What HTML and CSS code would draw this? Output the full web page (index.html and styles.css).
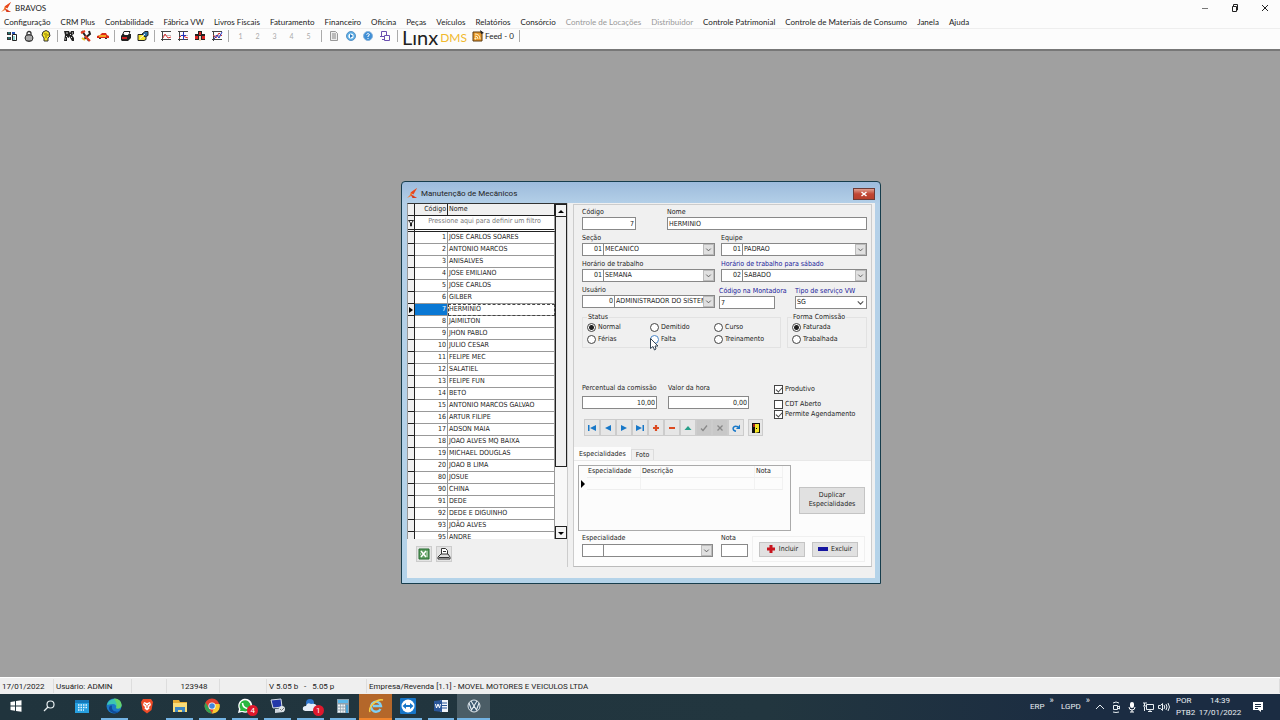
FILE: index.html
```html
<!DOCTYPE html>
<html lang="pt-BR">
<head>
<meta charset="utf-8">
<title>BRAVOS</title>
<link rel="stylesheet" href="styles.css">
</head>
<body>
<svg class="defs" aria-hidden="true">
  <symbol id="brand" viewBox="0 0 12 12"><path d="M11 0 4 5 3 8 0 11 4 9z" fill="#f47b30"/><path d="M4 5 11 0 7 7z" fill="#e8451e"/><path d="M4 7 6 8 11 11 6 11z" fill="#d93a1c"/></symbol>
  <symbol id="chev" viewBox="0 0 10 10"><path d="M2.500 4 5 6.500 7.500 4" fill="none" stroke="#555" stroke-width="1"/></symbol>
  <symbol id="chart" viewBox="0 0 12 12"><path d="M2.500 1v10M1 1.500h10M1 9.500h10" stroke="#444" fill="none"/><path d="M3 5.500h8" stroke="#bbb"/></symbol>
</svg>

<header class="titlebar">
  <svg class="brand"><use href="#brand"/></svg>
  <span class="app-name">BRAVOS</span>
  <div class="win-controls">
    <button aria-label="Minimizar"><svg viewBox="0 0 10 10"><path d="M2 5.500h6" stroke="#777" fill="none"/></svg></button>
    <button aria-label="Restaurar"><svg viewBox="0 0 10 10"><path d="M2.500 3.500h4v5h-4zM3.500 3V1.500h4v5.500H7" stroke="#222" fill="none"/></svg></button>
    <button aria-label="Fechar"><svg viewBox="0 0 10 10"><path d="M2 2l6 6M8 2 2 8" stroke="#222" fill="none"/></svg></button>
  </div>
</header>

<nav class="menubar">
  <button>Configuração</button><button>CRM Plus</button><button>Contabilidade</button><button>Fábrica VW</button><button>Livros Fiscais</button><button>Faturamento</button><button>Financeiro</button><button>Oficina</button><button>Peças</button><button>Veículos</button><button>Relatórios</button><button>Consórcio</button><button disabled>Controle de Locações</button><button disabled>Distribuidor</button><button>Controle Patrimonial</button><button>Controle de Materiais de Consumo</button><button>Janela</button><button>Ajuda</button>
</nav>

<div class="toolbar">
  <div class="tools">
    <button aria-label="Cadastro"><svg viewBox="0 0 12 12"><path d="M1 2h4v3H1zM1 7h4v3H1z" fill="#333"/><path d="M6 2h3v2H6z" fill="#2450b0"/><path d="M6.500 4.500h4v6h-4z" fill="#fff" stroke="#222"/><path d="M8 6v4M2 3h2M2 8h2" stroke="#2aa" /></svg></button>
    <button aria-label="Senha"><svg viewBox="0 0 12 12"><path d="M4 6V3.500a2 2 0 0 1 4 0V6" fill="none" stroke="#333" stroke-width="1.300"/><ellipse cx="6" cy="8" rx="4" ry="3.500" fill="#777" stroke="#333"/><path d="M3 7h6M3 9h6" stroke="#ddd"/></svg></button>
    <button aria-label="Usuário"><svg viewBox="0 0 12 12"><path d="M3 2Q6-1 9 2L10 6 8 8v3H4V8L2 5z" fill="#f4e32a" stroke="#333"/><path d="M6 3v5M4 4h1M8 4v2" stroke="#887500"/></svg></button>
  </div>
  <div class="tools">
    <button aria-label="Veículos novos"><svg viewBox="0 0 12 12"><path d="M1 1h5l1 2 1-2h3v3l-2 1 2 3v3H9L6 6v2L4 7v4H1l1-6z" fill="#222"/><path d="M3 3h2M3 6l1 1M7 4l1 1M9 3h1M2 9h1M8 7l1 1" stroke="#ddd"/></svg></button>
    <button aria-label="Oficina"><svg viewBox="0 0 12 12"><path d="M2 1l7 10M9 1l1 3-6 5" stroke="#222" stroke-width="2" fill="none"/><path d="M1 3l4-2M5 6l5 5" stroke="#df3b20" stroke-width="2"/><path d="M2 8l3 2" stroke="#e9c729" stroke-width="2"/></svg></button>
    <button aria-label="Carro"><svg viewBox="0 0 12 12"><path d="M0 6 3 5 5 3h4l1 2 2 1v2H0z" fill="#d92b18"/><path d="M2 5h7v2H2z" fill="#f5a525"/><path d="M2 8h2v1H2zM8 8h2v1H8z" fill="#333"/></svg></button>
  </div>
  <div class="tools">
    <button aria-label="Imprimir"><svg viewBox="0 0 12 12"><path d="M4 1.500h6L8 6H2z" fill="#fff" stroke="#222"/><path d="M1 6l2-2h8v4L8 11H2L1 10z" fill="#222"/><path d="M2 7h5v2H2z" fill="#c22"/><path d="M5 3h4L8 5H4z" fill="#fff"/></svg></button>
    <button aria-label="Editar"><svg viewBox="0 0 12 12"><path d="M1 4.500h6l2 1v4l-2 1H1z" fill="#f4e32a" stroke="#222"/><path d="M5 4 8 1.500h3v4L8 7z" fill="#2b72a8" stroke="#222"/><path d="M3 8.500 8 4" stroke="#fff"/></svg></button>
  </div>
  <div class="tools">
    <button aria-label="Gráfico 1"><svg viewBox="0 0 12 12"><use href="#chart"/><path d="M3 8 5 4l3 4 3-1" stroke="#d33" fill="none"/></svg></button>
    <button aria-label="Gráfico 2"><svg viewBox="0 0 12 12"><use href="#chart"/><path d="M2 8 5 5l3 2 3 1" stroke="#d33" fill="none"/><path d="M6.500 2v8M4 5.500h5" stroke="#23b"/></svg></button>
    <button aria-label="Equipe"><svg viewBox="0 0 12 12"><path d="M4 1h4v3h3v6H1V4h3z" fill="#222"/><path d="M5 2h2v3H5zM1 6h3v3H1zM8 6h3v3H8z" fill="#d22"/><path d="M5 6h2v5H5z" fill="#f1d6c0"/></svg></button>
    <button aria-label="Gráfico 3"><svg viewBox="0 0 12 12"><use href="#chart"/><path d="M2 5 5 8 8 3l3 3" stroke="#d33" fill="none"/><path d="M3 9 6 5l2 3 3-6" stroke="#23b" fill="none"/></svg></button>
  </div>
  <div class="tools spaced">
    <button disabled>1</button><button disabled>2</button><button disabled>3</button><button disabled>4</button><button disabled>5</button>
  </div>
  <div class="tools spaced">
    <button aria-label="Documento"><svg viewBox="0 0 12 12"><path d="M2.500 1.500h5l2 2v7h-7z" fill="#eee" stroke="#999"/><path d="M4 4h4M4 6h4M4 8h4" stroke="#888"/></svg></button>
    <button aria-label="Executar"><svg viewBox="0 0 12 12"><circle cx="6" cy="6" r="4.500" fill="#5aaee6" stroke="#5a92c4"/><circle cx="6" cy="6" r="2.600" fill="#fff"/><path d="M5 4l3 2-3 2z" fill="#2477c0"/></svg></button>
    <button aria-label="Ajuda"><svg viewBox="0 0 12 12"><circle cx="6" cy="6" r="4.500" fill="#3f8fd6" stroke="#8ab4dc"/><path d="M4.500 4.500Q6 2.500 7.500 4.500 7.500 5.500 6 6v1M6 8v1" stroke="#fff" fill="none"/></svg></button>
    <button aria-label="Janelas"><svg viewBox="0 0 12 12"><path d="M2.500 6V1.500h5v4M5.500 5.500h5v5h-5zM1 6.500h4M3 9.500h2" stroke="#6a4fb0" fill="none"/></svg></button>
  </div>
  <div class="tools brandtools">
    <span class="linx">Lınx</span><span class="dms">DMS</span>
    <button class="feed"><svg viewBox="0 0 12 12"><path d="M1 2h9v9H1z" fill="#e99a2c" stroke="#5b3a12"/><path d="M3 9V8h1v1zM3 6Q6 6 6 9M3 4Q8 4 8 9" stroke="#fff3c8" fill="none"/><path d="M8 0l4 3-3 1z" fill="#222"/></svg>Feed - 0</button>
  </div>
</div>

<main class="mdi">
  <section class="dialog" aria-label="Manutenção de Mecânicos">
    <div class="dialog-title">
      <svg class="brand"><use href="#brand"/></svg>
      <h1>Manutenção de Mecânicos</h1>
      <button class="close" aria-label="Fechar janela"><svg viewBox="0 0 8 6"><path d="M1.500 1l5 4M6.500 1l-5 4" stroke="#fff" stroke-width="1.500"/></svg></button>
    </div>
    <div class="client">
      <div class="list-pane">
        <div class="list">
          <div class="list-view">
          <table class="people">
            <colgroup><col class="c-mark"><col class="c-code"><col></colgroup>
            <thead>
              <tr><th></th><th class="num">Código</th><th>Nome</th></tr>
              <tr class="filter"><td><svg viewBox="0 0 6 8"><path d="M.5 1.500h5L3.500 4v3h-1V4z" fill="#fff" stroke="#222"/></svg></td><td colspan="2">Pressione aqui para definir um filtro</td></tr>
            </thead>
            <tbody>
              <tr><td></td><td>1</td><td>JOSE CARLOS SOARES</td></tr>
              <tr><td></td><td>2</td><td>ANTONIO MARCOS</td></tr>
              <tr><td></td><td>3</td><td>ANISALVES</td></tr>
              <tr><td></td><td>4</td><td>JOSE EMILIANO</td></tr>
              <tr><td></td><td>5</td><td>JOSE CARLOS</td></tr>
              <tr><td></td><td>6</td><td>GILBER</td></tr>
              <tr class="current"><td><svg viewBox="0 0 6 8"><path d="M1 1l4 3-4 3z"/></svg></td><td>7</td><td>HERMINIO</td></tr>
              <tr><td></td><td>8</td><td>JAIMILTON</td></tr>
              <tr><td></td><td>9</td><td>JHON PABLO</td></tr>
              <tr><td></td><td>10</td><td>JULIO CESAR</td></tr>
              <tr><td></td><td>11</td><td>FELIPE MEC</td></tr>
              <tr><td></td><td>12</td><td>SALATIEL</td></tr>
              <tr><td></td><td>13</td><td>FELIPE FUN</td></tr>
              <tr><td></td><td>14</td><td>BETO</td></tr>
              <tr><td></td><td>15</td><td>ANTONIO MARCOS GALVAO</td></tr>
              <tr><td></td><td>16</td><td>ARTUR FILIPE</td></tr>
              <tr><td></td><td>17</td><td>ADSON MAIA</td></tr>
              <tr><td></td><td>18</td><td>JOAO ALVES MQ BAIXA</td></tr>
              <tr><td></td><td>19</td><td>MICHAEL DOUGLAS</td></tr>
              <tr><td></td><td>20</td><td>JOAO B LIMA</td></tr>
              <tr><td></td><td>80</td><td>JOSUE</td></tr>
              <tr><td></td><td>90</td><td>CHINA</td></tr>
              <tr><td></td><td>91</td><td>DEDE</td></tr>
              <tr><td></td><td>92</td><td>DEDE E DIGUINHO</td></tr>
              <tr><td></td><td>93</td><td>JOÃO ALVES</td></tr>
              <tr><td></td><td>95</td><td>ANDRE</td></tr>
            </tbody>
          </table>
          </div>
          <div class="scroll">
            <button aria-label="Rolar para cima"><svg viewBox="0 0 10 10"><path d="M2 7l3-3 3 3z"/></svg></button>
            <div class="thumb"></div>
            <div class="track"></div>
            <button aria-label="Rolar para baixo"><svg viewBox="0 0 10 10"><path d="M2 4l3 3 3-3z"/></svg></button>
          </div>
        </div>
        <div class="list-actions">
          <button aria-label="Exportar para Excel"><svg viewBox="0 0 14 14"><path d="M2 2h10v10H2z" fill="#5c9c60" stroke="#276d31"/><path d="M4 4l5 6M9 4l-5 6" stroke="#fff" stroke-width="1.500"/><path d="M10 4v6M3 7h1" stroke="#cfe8cf"/></svg></button>
          <button aria-label="Imprimir lista"><svg viewBox="0 0 14 14"><path d="M4.500 7V1.500h4l2 2V7" fill="#fff" stroke="#333"/><path d="M4 7h7l2 3v2H1v-2z" fill="#ddd" stroke="#333"/><path d="M2 10.500h10" stroke="#333"/><path d="M6 4.500h3" stroke="#333"/></svg></button>
        </div>
      </div>

      <form class="form-pane">
        <div class="fields">
          <div class="row">
            <div class="field w-code"><label for="codigo">Código</label><input id="codigo" class="right" value="7"></div>
            <div class="field push grow"><label for="nome">Nome</label><input id="nome" value="HERMINIO"></div>
          </div>
          <div class="row two">
            <div class="field"><label for="secao">Seção</label><div class="combo"><input id="secao" value="01"><select aria-label="Nome da seção"><option>MECANICO</option></select><svg class="arrow"><use href="#chev"/></svg></div></div>
            <div class="field"><label for="equipe">Equipe</label><div class="combo"><input id="equipe" value="01"><select aria-label="Nome da equipe"><option>PADRAO</option></select><svg class="arrow"><use href="#chev"/></svg></div></div>
          </div>
          <div class="row two">
            <div class="field"><label for="horario">Horário de trabalho</label><div class="combo"><input id="horario" value="01"><select aria-label="Nome do horário"><option>SEMANA</option></select><svg class="arrow"><use href="#chev"/></svg></div></div>
            <div class="field"><label for="sabado" class="blue">Horário de trabalho para sábado</label><div class="combo"><input id="sabado" value="02"><select aria-label="Nome do horário de sábado"><option>SABADO</option></select><svg class="arrow"><use href="#chev"/></svg></div></div>
          </div>
          <div class="row user-row">
            <div class="field"><label for="usuario">Usuário</label><div class="combo wide"><input id="usuario" value="0"><select aria-label="Nome do usuário"><option>ADMINISTRADOR DO SISTEMA</option></select><svg class="arrow"><use href="#chev"/></svg></div></div>
            <div class="field mont"><label for="montadora" class="blue">Código na Montadora</label><input id="montadora" value="7"></div>
            <div class="field tipo"><label for="tipo" class="blue">Tipo de serviço VW</label><div class="combo plain"><select id="tipo"><option>SG</option></select><svg class="arrow"><use href="#chev"/></svg></div></div>
          </div>
          <div class="row groups">
            <fieldset class="status"><legend>Status</legend>
              <label><input type="radio" name="status" checked>Normal</label><label><input type="radio" name="status">Demitido</label><label><input type="radio" name="status">Curso</label>
              <label><input type="radio" name="status">Férias</label><label class="hover"><input type="radio" name="status">Falta</label><label><input type="radio" name="status">Treinamento</label>
            </fieldset>
            <fieldset class="forma"><legend>Forma Comissão</legend>
              <label><input type="radio" name="forma" checked>Faturada</label>
              <label><input type="radio" name="forma">Trabalhada</label>
            </fieldset>
          </div>
          <div class="row money">
            <div class="field pct"><label for="pct">Percentual da comissão</label><input id="pct" class="right" value="10,00"></div>
            <div class="field hora"><label for="hora">Valor da hora</label><input id="hora" class="right" value="0,00"></div>
            <div class="checks">
              <label><input type="checkbox" checked>Produtivo</label>
              <label class="gap"><input type="checkbox">CDT Aberto</label>
              <label><input type="checkbox" checked>Permite Agendamento</label>
            </div>
          </div>
          <div class="navigator">
            <button type="button" aria-label="Primeiro"><svg viewBox="0 0 10 10"><path d="M1 2h1.500v6H1zM9 2v6L3 5z" fill="#1878c8"/></svg></button>
            <button type="button" aria-label="Anterior"><svg viewBox="0 0 10 10"><path d="M8 2v6L2 5z" fill="#1878c8"/></svg></button>
            <button type="button" aria-label="Próximo"><svg viewBox="0 0 10 10"><path d="M2 2v6l6-3z" fill="#1878c8"/></svg></button>
            <button type="button" aria-label="Último"><svg viewBox="0 0 10 10"><path d="M9 2H7.500v6H9zM1 2v6l6-3z" fill="#1878c8"/></svg></button>
            <button type="button" aria-label="Inserir"><svg viewBox="0 0 10 10"><path d="M5 2v6M2 5h6" stroke="#dc4a20" stroke-width="2.200"/></svg></button>
            <button type="button" aria-label="Apagar"><svg viewBox="0 0 10 10"><path d="M2 5h6" stroke="#dc4a20" stroke-width="2"/></svg></button>
            <button type="button" aria-label="Alterar"><svg viewBox="0 0 10 10"><path d="M1.500 7 5 3l3.500 4z" fill="#28a08a"/></svg></button>
            <button type="button" aria-label="Confirmar" disabled><svg viewBox="0 0 10 10"><path d="M2 5.500 4 7.500 8 2.500" stroke="#888" stroke-width="1.300" fill="none"/></svg></button>
            <button type="button" aria-label="Cancelar" disabled><svg viewBox="0 0 10 10"><path d="M2.500 2.500l5 5M7.500 2.500l-5 5" stroke="#888" stroke-width="1.300"/></svg></button>
            <button type="button" aria-label="Atualizar"><svg viewBox="0 0 10 10"><path d="M5 8.200Q1.500 7.500 2.200 4.800 3.500 2.200 7 3.800" stroke="#1878c8" stroke-width="1.500" fill="none"/><path d="M9 1.500V6H5z" fill="#1878c8"/></svg></button>
            <button type="button" class="exit" aria-label="Sair"><svg viewBox="0 0 10 12"><path d="M1 1h8v10H1z" fill="#111"/><path d="M4 2h4v8L4 11z" fill="#f5e626"/><path d="M2 2h2v3H2z" fill="#a22"/><path d="M5 6h1v1H5z"/></svg></button>
          </div>
        </div>

        <div class="tabs" role="tablist"><button type="button" role="tab" class="on">Especialidades</button><button type="button" role="tab">Foto</button></div>
        <div class="page">
          <div class="page-top">
            <div class="spec-box">
              <table class="spec">
                <colgroup><col class="s-mark"><col class="s-esp"><col class="s-desc"><col></colgroup>
                <thead><tr><th></th><th>Especialidade</th><th>Descrição</th><th>Nota</th></tr></thead>
                <tbody><tr><td><svg viewBox="0 0 6 8"><path d="M1 0l4 4-4 4z"/></svg></td><td></td><td></td><td></td></tr></tbody>
              </table>
            </div>
            <button type="button" class="btn dup">Duplicar<br>Especialidades</button>
          </div>
          <div class="page-bottom">
            <div class="field esp"><label for="esp">Especialidade</label><div class="combo"><input id="esp"><select aria-label="Nome da especialidade"><option></option></select><svg class="arrow"><use href="#chev"/></svg></div></div>
            <div class="field nota"><label for="nota">Nota</label><input id="nota"></div>
            <div class="actions">
              <button type="button" class="btn"><svg viewBox="0 0 10 10"><path d="M5 1v8M1 5h8" stroke="#c8141e" stroke-width="3"/></svg>Incluir</button>
              <button type="button" class="btn"><svg viewBox="0 0 10 10"><path d="M0 3h10v4H0z" fill="#1414a0"/></svg>Excluir</button>
            </div>
          </div>
        </div>
      </form>
    </div>
  </section>
  <svg class="cursor" viewBox="0 0 9 13"><path d="M.5.5v10L3 8.500l1.500 3.500 1.500-1L5 8h3z" fill="#fff" stroke="#345"/></svg>
</main>

<footer class="statusbar">
  <span class="s1">17/01/2022</span><span class="s2">Usuário: ADMIN</span><span class="s3"></span><span class="s4">123948</span><span class="s5"></span><span class="s6">V 5.05 b &nbsp; - &nbsp; 5.05 p</span><span class="s7">Empresa/Revenda [1.1] - MOVEL MOTORES E VEICULOS LTDA</span>
</footer>

<div class="taskbar">
  <div class="apps">
    <button aria-label="Iniciar"><svg viewBox="0 0 16 16"><path d="M2.500 4 7 3.300V7.500H2.500zM8 3.100 13.500 2.300V7.500H8zM2.500 8.500H7v4.200L2.500 12zM8 8.500h5.500v5.200L8 12.900z" fill="#fff"/></svg></button>
    <button aria-label="Pesquisar"><svg viewBox="0 0 16 16"><circle cx="9.500" cy="6.500" r="3.500" fill="none" stroke="#e8eef0" stroke-width="1.200"/><path d="M7 9 3 13" stroke="#e8eef0" stroke-width="1.200"/></svg></button>
    <button aria-label="Calendário"><svg viewBox="0 0 16 16"><path d="M1 2h14v13H1z" fill="#27a0e0"/><path d="M1 2h14v3H1z" fill="#1577b8"/><path d="M4 7h9M4 9.500h9M4 12h6" stroke="#e6f5ff" stroke-width="1.300" stroke-dasharray="1.500 1"/></svg></button>
    <button class="open" aria-label="Edge"><svg viewBox="0 0 16 16"><circle cx="8" cy="8" r="7.500" fill="#1b78c8"/><path d="M1 7C2 0 14-2 15.500 7c0 3-3 4-5.500 3 1-1 0-4-3-4S2 7 1 7z" fill="#3cc5b2"/><path d="M8 .5C13 0 16 4 15.500 8c-1 3-4 3-5.500 2 2-3 0-6-2-9.500z" fill="#67d46c"/><path d="M6 8c-1 4 3 7 8 5-4 4-11 2-11-3 0-2 2-3 3-2z" fill="#104a98"/></svg></button>
    <button aria-label="Brave"><svg viewBox="0 0 16 16"><path d="M4 1h8l2 3-1.500 8L8 15.500 3.500 12 2 4z" fill="#ee4a26"/><path d="M5 4l3 1 3-1 1 3-2 2 .5 1.500L8 12.500 5.500 10.500 6 9 4 7z" fill="#fff"/><path d="M5.500 6 7 7M10.500 6 9 7M8 7v3" stroke="#ee4a26"/></svg></button>
    <button class="open" aria-label="Explorador"><svg viewBox="0 0 16 16"><path d="M1 2h6l1 2h7v10H1z" fill="#e7ad36"/><path d="M1 5h14v9H1z" fill="#f9dc79"/><path d="M3 9h10v5H10v-2H6v2H3z" fill="#3e87c4"/></svg></button>
    <button class="open" aria-label="Chrome"><svg viewBox="0 0 16 16"><circle cx="8" cy="8" r="7.500" fill="#e0412f"/><path d="M1.500 4.500 8 15.500A7.500 7.500 0 0 1 1.500 4.500z" fill="#33a252"/><path d="M15.500 6A7.500 7.500 0 0 1 8 15.500L11 6z" fill="#f9cb30"/><circle cx="8" cy="8" r="3.600" fill="#fff"/><circle cx="8" cy="8" r="2.800" fill="#4285dd"/></svg></button>
    <button class="open" aria-label="WhatsApp"><svg viewBox="0 0 16 16"><path d="M1 15l1-4A7 7 0 1 1 5 14z" fill="#fff"/><path d="M3 13l.5-2A5.500 5.500 0 1 1 6 13z" fill="#2bb741"/><path d="M5.500 5Q6 10 10.500 10.500" stroke="#fff" stroke-width="1.600" fill="none"/></svg><span class="badge">4</span></button>
    <button class="open" aria-label="Área remota"><svg viewBox="0 0 16 16"><path d="M1 2 11 1l1 8-9 1z" fill="#2438a8" stroke="#d5dde5"/><path d="M5 11l7-1 2 4-9 1z" fill="#ccd4dc"/><circle cx="12" cy="11" r="3" fill="#dfe5e8"/><path d="M10 11l1.500 1.500L14 10" stroke="#777" fill="none"/></svg></button>
    <button class="open" aria-label="Mensagens"><svg viewBox="0 0 16 16"><circle cx="8" cy="5" r="4" fill="#2c73cb"/><path d="M1 12Q0 8 4 8 5 4 9 6q6-1 6 4 0 3-3 3H3z" fill="#e6eef8"/></svg><span class="badge">1</span></button>
    <button class="open" aria-label="Calculadora"><svg viewBox="0 0 16 16"><path d="M2 1h12v14H2z" fill="#8fa1ac"/><path d="M3 2h10v3H3z" fill="#5bb8ea"/><path d="M3 7.500h7M3 10.500h7M3 13.500h7" stroke="#f2f5f7" stroke-width="2" stroke-dasharray="2 .700"/><path d="M11 7h2v8h-2z" fill="#4aa3d8"/></svg></button>
    <button class="open hot" aria-label="Internet Explorer"><svg viewBox="0 0 16 16"><path d="M12.500 11A5 5 0 1 1 13 8H5" fill="none" stroke="#7fd0f5" stroke-width="2.300"/><path d="M2 14C0 9 9 0 15 2" stroke="#f8cf45" stroke-width="1.500" fill="none"/></svg></button>
    <button class="open" aria-label="TeamViewer"><svg viewBox="0 0 16 16"><rect width="16" height="16" rx="1" fill="#1675c8"/><circle cx="8" cy="8" r="6.500" fill="#fff"/><path d="M2.500 8 6 5v2h4V5l3.500 3L10 11V9H6v2z" fill="#1675c8"/></svg></button>
    <button class="open" aria-label="Word"><svg viewBox="0 0 16 16"><path d="M7 2h8v12H7z" fill="#f2f6fb"/><path d="M9 5h5M9 7.500h5M9 10h5" stroke="#2a5699"/><path d="M1 3l8-1v12l-8-1z" fill="#2a5699"/><path d="M2.500 6l1 4 1.500-4 1.500 4 1-4" stroke="#fff" fill="none"/></svg></button>
    <button class="sel" aria-label="BRAVOS"><svg viewBox="0 0 16 16"><circle cx="8" cy="8" r="6" fill="#3f5a70" stroke="#dde5ea"/><path d="M5 3l3 5 3-5M3 5l2.500 7L8 8l2.500 4L13 5" stroke="#e8eef2" stroke-width="1.100" fill="none"/></svg></button>
  </div>
  <div class="tray">
    <span class="link">ERP<i>»</i></span><span class="link">LGPD<i>»</i></span>
    <button aria-label="Mostrar ícones ocultos"><svg viewBox="0 0 12 12"><path d="M2 8l4-4 4 4" stroke="#e8eef2" fill="none"/></svg></button>
    <button aria-label="Reunião"><svg viewBox="0 0 12 12"><path d="M3.500 4.500h4v4h-4zM7.500 6l2-1v3l-2-1M3 2q3-2 6 0M3 11q3 1 6 0" stroke="#e8eef2" fill="none"/></svg></button>
    <button aria-label="Microfone"><svg viewBox="0 0 12 12"><rect x="4" y="1" width="4" height="6" rx="2" fill="#fff"/><path d="M3 6q0 3 3 3t3-3M6 9v2M4 11h4" stroke="#fff" fill="none"/></svg></button>
    <button aria-label="Rede"><svg viewBox="0 0 12 12"><path d="M4.500 3.500h7v5h-7zM6 10.500h4M8 9v1M1 2h4M2.500 2v3M1 5h3M2.500 6v4" stroke="#e8eef2" fill="none"/></svg></button>
    <button aria-label="Volume"><svg viewBox="0 0 12 12"><path d="M.5 4.500h2l2-2v7l-2-2h-2zM6 4q1.500 2 0 4M8 3q2 3 0 6M10 2q3 4 0 8" stroke="#e8eef2" fill="none"/></svg></button>
    <span class="lang">POR<br>PTB2</span>
    <span class="clock">14:39<br>17/01/2022</span>
    <button class="note" aria-label="Notificações"><svg viewBox="0 0 12 12"><path d="M1 1h10v8H9v2L6.500 9H1z" fill="#fff"/><path d="M3 3.500h6M3 5.500h6M3 7.500h3" stroke="#1b2c42"/></svg></button>
  </div>
</div>
</body>
</html>
```

FILE: styles.css
```css
* { box-sizing: border-box; }
html, body { height: 100%; }
body {
  margin: 0;
  display: flex;
  flex-direction: column;
  overflow: hidden;
  background: #fcfcfc;
  color: #222;
  font: 8px/12px Lato, "Open Sans", sans-serif;
}
button, input, select { font: inherit; color: inherit; margin: 0; padding: 0; border: 0; border-radius: 0; background: none; }
button { display: flex; align-items: center; justify-content: center; }
svg { display: block; flex: none; }
.defs { position: absolute; width: 0; height: 0; }
.brand { width: 11px; height: 11px; }

/* Main window */
.titlebar { display: flex; align-items: center; height: 15px; padding-left: 1px; }
.app-name { margin-left: 3px; }
.win-controls { display: flex; margin-left: auto; }
.win-controls button { width: 30px; height: 14px; }
.win-controls svg { width: 10px; height: 10px; }
.menubar { display: flex; gap: 10px; height: 14px; padding-left: 4px; border-bottom: 1px solid #eee; white-space: nowrap; }
.menubar button:disabled { color: #999; }
.toolbar { display: flex; align-items: center; height: 20px; padding: 0 0 6px 1px; }
.tools { display: flex; align-items: center; padding: 0 3px 0 2px; border-right: 1px solid #aaa; height: 12px; }
.spaced { padding: 0 4px 0 3px; }
.tools button { width: 17px; height: 14px; }
.tools svg { width: 12px; height: 12px; }
.tools button:disabled { color: #aaa; font-size: 7px; }
.brandtools { padding-left: 4px; }
.linx { font: 400 20px/14px Lato, sans-serif; color: #222; margin-top: 2px; }
.dms { font: 400 12px/14px Lato, sans-serif; color: #f0b92c; margin: 4px 5px 0 2px; }
.tools .feed { width: auto; gap: 1px; padding-right: 2px; }

.mdi { flex: 1; min-height: 0; position: relative; background: #a0a0a0; border-top: 2px solid #777; }

/* Child window */
.dialog {
  position: absolute;
  left: 401px;
  top: 130px;
  width: 480px;
  display: flex;
  flex-direction: column;
  padding: 0 5px 5px;
  border: 1px solid #173d4c;
  border-radius: 4px 4px 0 0;
  background: linear-gradient(#9dbbdc, #b4d0e8 22px, #b4d3e9);
  font: 7px/9px "DejaVu Sans Condensed", "DejaVu Sans", sans-serif;
}
.dialog-title { display: flex; align-items: center; height: 21px; padding: 2px 0 0 0; }
.dialog-title h1 { margin: 0 0 0 3px; font: 8px/12px Roboto, "Open Sans", sans-serif; }
.close { width: 22px; height: 12px; margin-left: auto; border: 1px solid #6d3a36; background: linear-gradient(#e0a090, #c14634 50%, #b8402c); }
.close svg { width: 8px; height: 6px; }
.client { display: flex; height: 375px; padding-bottom: 11px; background: #f0f0f0; }

.list-pane { width: 161px; display: flex; flex-direction: column; border-right: 1px solid #ccc; }
.list { display: flex; height: 336px; border-left: 1px solid #999; border-top: 1px solid #333; }
.list-view { flex: 1; overflow: hidden; background: #fff; }
.people { width: 100%; table-layout: fixed; border-spacing: 0; }
.people .c-mark { width: 7px; }
.people .c-code { width: 33px; }
.people th, .people td { height: 12px; padding: 0 1px; border-right: 1px solid #999; border-bottom: 1px solid #999; font-weight: 400; text-align: left; line-height: 11px; white-space: nowrap; overflow: hidden; }
.people th { background: #f0f0f0; border-color: #222; }
.people td:first-child, .people th:first-child { background: #f0f0f0; border-color: #222; padding: 0; }
.people td:first-child svg { width: 6px; height: 8px; }
.people tbody td:nth-child(2), .people .num { text-align: right; }
.people .filter td { height: 16px; border-bottom: 3px double #222; vertical-align: top; }
.people .filter td:first-child { vertical-align: middle; }
.people .filter td:last-child { color: #777; text-align: center; }
.people .current td:nth-child(2) { background: #0a78d4; color: #fff; }
.people .current td:nth-child(3) { outline: 1px dashed #444; outline-offset: -1px; }
.scroll { width: 12px; display: flex; flex-direction: column; }
.scroll button { height: 13px; border: 1px solid #222; background: #f4f4f4; }
.scroll svg { width: 10px; height: 10px; }
.thumb { flex: 252; border: 1px solid #222; border-top: 0; background: #f0f0f0; }
.track { flex: 60; background: #f8f8f8; }
.list-actions { display: flex; gap: 4px; padding: 7px 0 0 9px; }
.list-actions button { width: 16px; height: 16px; border: 1px solid #ccc; background: #e4e4e4; }
.list-actions svg { width: 14px; height: 14px; }

.form-pane { flex: 1; min-width: 0; margin: 1px 3px 0 5px; display: flex; flex-direction: column; border: 1px solid #ccc; border-bottom-color: #bbb; }
.fields { padding: 2px 4px 0 8px; }
.row { display: flex; }
.row + .row { margin-top: 3px; }
.field { display: flex; flex-direction: column; min-width: 0; }
.field label { height: 10px; line-height: 10px; white-space: nowrap; }
.field > input, .combo { height: 13px; border: 1px solid #888; background: #fff; }
.field > input { width: 100%; padding: 0 1px; }
.right { text-align: right; }
.blue { color: #20209a; }
.w-code { width: 54px; }
.push { margin-left: 31px; }
.grow { flex: 1; }
.combo { position: relative; display: flex; }
.combo input { width: 21px; text-align: right; padding-right: 1px; border-right: 1px solid #888; }
.combo.wide input { width: 32px; }
.combo select { flex: 1; min-width: 0; appearance: none; padding: 0 11px 0 1px; overflow: hidden; }
.arrow { position: absolute; right: 0; top: 0; width: 11px; height: 11px; background: #e0e0e0; border: 1px solid #bbb; pointer-events: none; }
.plain .arrow { background: none; border: 0; }
.two { display: grid; grid-template-columns: 133px 1fr; gap: 6px; }
.user-row .field:first-child { width: 133px; }
.mont { width: 56px; margin: 1px 0 0 4px; }
.tipo { flex: 1; margin: 1px 0 0 20px; }
.groups { gap: 6px; }
.row.groups { margin-top: 4px; }
fieldset { margin: 0; padding: 0 0 2px 4px; border: 1px solid #e2e2e2; min-width: 0; display: grid; }
legend { padding: 0 1px; line-height: 8px; }
.status { width: 199px; grid-template-columns: 63px 64px 1fr; }
.forma { flex: 1; }
fieldset label, .checks label { display: flex; align-items: center; gap: 2px; height: 12px; white-space: nowrap; }
input[type=radio], input[type=checkbox] { appearance: none; flex: none; width: 9px; height: 9px; border: 1px solid #444; background: #fff; }
input[type=radio] { border-radius: 50%; }
input[type=radio]:checked { background: radial-gradient(#222 0 2px, #fff 3px); }
.hover input[type=radio] { border-color: #4a86c8; }
input[type=checkbox]:checked::before { content: ""; display: block; width: 3px; height: 5px; margin-left: 2px; border: solid #444; border-width: 0 1px 1px 0; transform: rotate(42deg); }
.row.money { margin-top: 35px; }
.pct { width: 75px; }
.hora { width: 81px; margin-left: 11px; }
.pct label, .hora label { height: 13px; }
.checks { margin: 1px 0 0 25px; }
.checks label { height: 10px; }
.checks .gap { margin-top: 5px; }
.navigator { display: flex; padding-left: 2px; }
.navigator button { width: 16px; height: 17px; border: 1px solid #ccc; background: #e6e6e6; }
.navigator button:disabled { background: #c8c8c8; }
.navigator svg { width: 10px; height: 10px; }
.navigator .exit { width: 15px; margin-left: 4px; }
.navigator .exit svg { height: 12px; }

.tabs { display: flex; align-items: flex-end; margin-top: auto; }
.tabs button { height: 11px; padding: 0 4px; border: 1px solid #ddd; border-bottom: 0; }
.tabs .on { height: 13px; background: #fcfcfc; border-color: #fcfcfc; }
.page { height: 106px; padding: 4px 6px 0 4px; background: #fcfcfc; border-top: 1px solid #e8e8e8; }
.page-top { display: flex; align-items: center; gap: 8px; }
.spec-box { flex: 1; height: 66px; border: 1px solid #aaa; }
.spec { width: 204px; table-layout: fixed; border-spacing: 0; }
.spec .s-mark { width: 8px; }
.spec .s-esp { width: 54px; }
.spec .s-desc { width: 114px; }
.spec th, .spec td { height: 12px; padding: 0 1px; font-weight: 400; text-align: left; border-bottom: 1px solid #eee; border-right: 1px solid #f2f2f2; }
.spec td:first-child, .spec th:first-child { padding: 0; border: 0; }
.spec svg { width: 6px; height: 8px; margin-left: 1px; }
.btn { gap: 3px; border: 1px solid #c4c4c4; background: #e1e1e1; line-height: 9px; }
.dup { width: 66px; height: 27px; margin-top: 4px; }
.page-bottom { display: flex; padding: 2px 0 0 4px; }
.page-bottom .field label { height: 11px; }
.esp { width: 131px; }
.nota { width: 27px; margin-left: 8px; }
.actions { flex: 1; display: flex; align-items: center; justify-content: center; gap: 7px; height: 26px; margin: 3px 0 0 4px; border: 1px solid #f0f0f0; }
.actions .btn { width: 46px; height: 15px; }
.actions svg { width: 10px; height: 10px; }
.cursor { position: absolute; left: 650px; top: 287px; width: 9px; height: 13px; }

/* Status bar */
.statusbar { display: flex; align-items: center; height: 17px; background: #efefef; border-top: 1px solid #fff; white-space: nowrap; }
.statusbar, .taskbar { font-family: Roboto, "Open Sans", sans-serif; }
.statusbar span { height: 14px; line-height: 15px; padding-left: 2px; border-right: 1px solid #ddd; }
.s1 { width: 54px; }
.s2 { width: 78px; }
.s3 { width: 35px; }
.s4 { width: 53px; text-align: center; }
.s5 { width: 47px; }
.s6 { width: 100px; }
.s7 { flex: 1; }

/* Taskbar */
.taskbar { display: flex; height: 26px; background: linear-gradient(90deg, #20343d, #22363f 60%, #1b2c42 85%); color: #e8eef2; }
.apps { display: grid; grid-template-columns: repeat(15, 1fr); width: 490px; }
.apps button { position: relative; border-bottom: 2px solid transparent; }
.apps svg { width: 16px; height: 16px; }
.apps .open::after { content: ""; position: absolute; left: 3px; right: 3px; bottom: -2px; height: 2px; background: #74b4e4; }
.apps .hot { background: #b4672a; }
.apps .hot::after { left: 0; right: 0; background: #f0842c; }
.apps .sel { background: #4b5d66; border-color: #74b4e4; }
.badge { position: absolute; right: 3px; bottom: 2px; width: 11px; height: 11px; border-radius: 50%; background: #e0182c; color: #fff; line-height: 11px; text-align: center; }
.tray { display: flex; align-items: center; margin-left: auto; }
.tray svg { width: 12px; height: 12px; }
.tray button { width: 16px; height: 26px; }
.link { display: flex; width: 31px; }
.link i { font-style: normal; margin: -7px 0 0 5px; font-size: 9px; }
.lang { width: 19px; margin-left: 4px; }
.clock { width: 44px; text-align: center; margin-left: 3px; }
.tray .note { width: 32px; margin-right: 6px; }
```
